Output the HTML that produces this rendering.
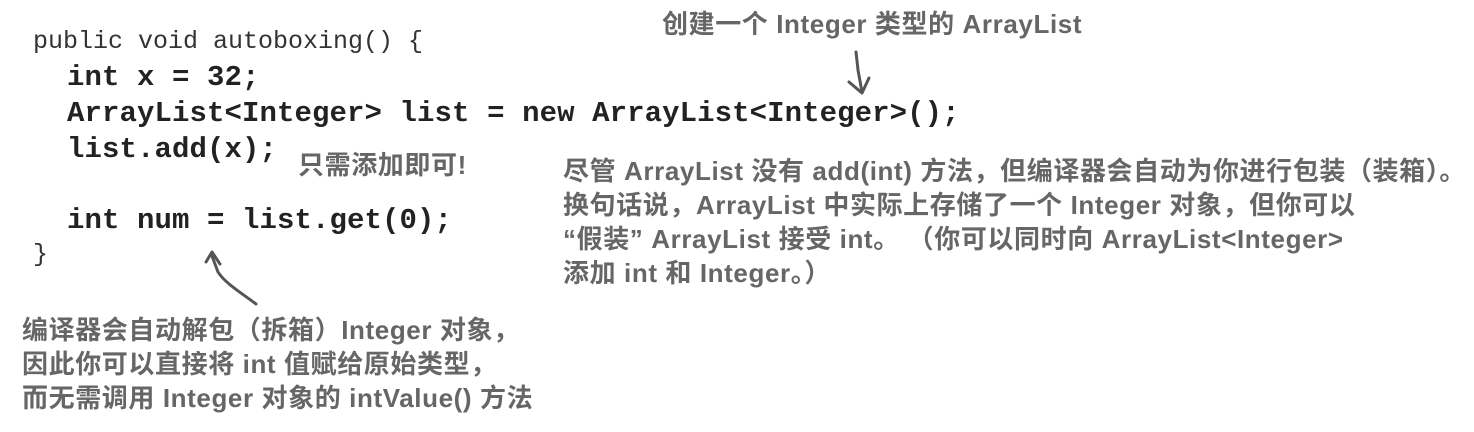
<!DOCTYPE html>
<html><head><meta charset="utf-8"><style>
body{margin:0;width:1474px;height:432px;background:#fff;position:relative;overflow:hidden}
.c{position:absolute;font-family:"Liberation Mono",monospace;color:#222;white-space:pre;line-height:1}
.p{font-size:25px;color:#333}
.b{font-size:29px;font-weight:bold;letter-spacing:0.1px}
.a{position:absolute;font-family:"Liberation Sans","Noto Sans CJK SC",sans-serif;font-weight:bold;color:#666;font-size:26px;letter-spacing:0.6px;white-space:pre;line-height:34px}
</style></head><body>
<div class="c p" style="left:33px;top:29px">public void autoboxing() {</div>
<div class="c b" style="left:67px;top:63px">int x = 32;</div>
<div class="c b" style="left:67px;top:99px">ArrayList&lt;Integer&gt; list = new ArrayList&lt;Integer&gt;();</div>
<div class="c b" style="left:67px;top:135px">list.add(x);</div>
<div class="c b" style="left:67px;top:206px">int num = list.get(0);</div>
<div class="c p" style="left:33px;top:242px">}</div>

<div class="a" style="left:662px;top:7px">创建一个 Integer 类型的 ArrayList</div>
<div class="a" style="left:298px;top:148px">只需添加即可!</div>
<div class="a" style="left:563px;top:154px">尽管 ArrayList 没有 add(int) 方法，但编译器会自动为你进行包装（装箱）。
换句话说，ArrayList 中实际上存储了一个 Integer 对象，但你可以
“假装” ArrayList 接受 int。 （你可以同时向 ArrayList&lt;Integer&gt;
添加 int 和 Integer。）</div>
<div class="a" style="left:22px;top:313px">编译器会自动解包（拆箱）Integer 对象，
因此你可以直接将 int 值赋给原始类型，
而无需调用 Integer 对象的 intValue() 方法</div>

<svg style="position:absolute;left:0;top:0" width="1474" height="432">
<g fill="none" stroke="#555" stroke-width="3" stroke-linecap="round" stroke-linejoin="round">
<path d="M856 52 L858 70 L862 92"/>
<path d="M849 82 L862 93 L869 78"/>
<path d="M256 304 C240 292 225 283 218 272 L212 256"/>
<path d="M206 262 L212 252 L220 264"/>
</g>
</svg>
</body></html>
